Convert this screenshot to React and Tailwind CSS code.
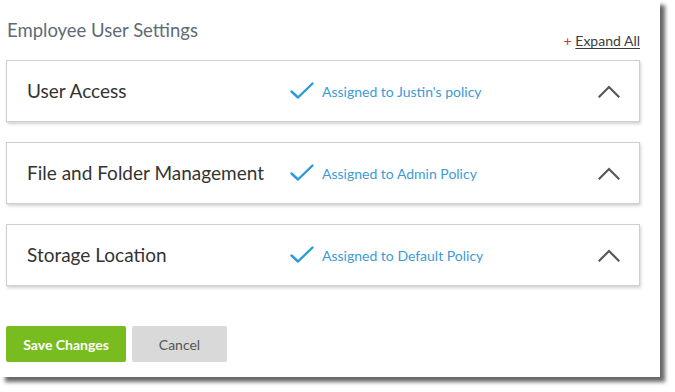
import React from 'react';

const SECTIONS = [
    { id: 'access', title: 'User Access', policy: "Assigned to Justin's policy" },
    { id: 'files', title: 'File and Folder Management', policy: 'Assigned to Admin Policy' },
    { id: 'storage', title: 'Storage Location', policy: 'Assigned to Default Policy' },
];

const Check = () => (
    <svg width="24" height="18" viewBox="0 0 24 18" fill="none">
        <path d="M1.5 9.5 L8 15.5 L22.5 1.5" stroke="#2a9bd8" strokeWidth="2.4" strokeLinecap="round" strokeLinejoin="round" />
    </svg>
);

const ChevronUp = () => (
    <svg width="22" height="13" viewBox="0 0 22 13" fill="none">
        <path d="M1.5 11.5 L11 2 L20.5 11.5" stroke="#595959" strokeWidth="2.2" strokeLinecap="square" />
    </svg>
);

const SectionCard = ({ title, policy }) => (
    <div className="flex h-[62px] items-center border border-[#cfcfcf] bg-white pl-5 pr-[19px] shadow-[1px_2px_3px_rgba(0,0,0,0.18)]">
        <div className="w-[263px] text-[19px] font-normal text-[#333]">{title}</div>
        <div className="flex flex-1 items-center">
            <Check />
            <span className="ml-[8px] text-[14px] text-[#3d9ad6]">{policy}</span>
        </div>
        <ChevronUp />
    </div>
);

export default function App() {
    return (
        <div className="min-h-screen bg-white" style={{ fontFamily: 'Lato, "Open Sans", sans-serif' }}>
            <div className="flex h-[377px] w-[660px] flex-col bg-white px-[6px] shadow-[5px_5px_4px_rgba(0,0,0,0.6)]">
                <div className="flex w-[634px] flex-col">
                    <div className="flex items-end justify-between pt-[18px]">
                        <h1 className="pl-px text-[18.5px] leading-[24px] text-[#5f6b75]">Employee User Settings</h1>
                        <div className="mb-[-8px] text-[14px] leading-[18px]">
                            <span className="text-[#c0392b]">+ </span>
                            <span className="text-[#3b3b3b] underline underline-offset-2">Expand All</span>
                        </div>
                    </div>
                    <div className="mt-[18px] flex flex-col gap-[20px]">
                        {SECTIONS.map((s) => (
                            <SectionCard key={s.id} title={s.title} policy={s.policy} />
                        ))}
                    </div>
                </div>
                <div className="mt-[40px] flex gap-[6px]">
                    <button className="h-[36px] w-[120px] rounded-[2px] bg-[#78bc1f] text-[14px] font-bold text-white">Save Changes</button>
                    <button className="h-[36px] w-[95px] rounded-[2px] bg-[#d9d9d9] text-[14px] text-[#555]">Cancel</button>
                </div>
            </div>
        </div>
    );
}
